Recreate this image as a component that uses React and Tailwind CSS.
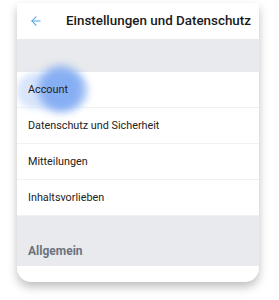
import { ArrowLeft } from "lucide-react";

const rows = ["Account", "Datenschutz und Sicherheit", "Mitteilungen", "Inhaltsvorlieben"];

export default function App() {
  return (
    <div className="w-[279px] h-[300px] bg-white pt-[3px] px-[17px] font-['Roboto',sans-serif]">
      <div className="w-[242px] h-[279px] bg-white rounded-b-[14px] shadow-[0_5px_10px_rgba(0,0,0,0.25)] overflow-hidden flex flex-col">
        {/* header */}
        <div className="h-[36px] flex items-center pl-[12px] shrink-0">
          <ArrowLeft className="w-[14px] h-[14px] text-[#4aa3df] shrink-0" strokeWidth={1.8} />
          <span className="ml-[23px] text-[13.4px] font-medium text-[#1a1a1a] whitespace-nowrap">
            Einstellungen und Datenschutz
          </span>
        </div>
        <div className="h-[33px] bg-[#e8eaed] shrink-0" />
        {rows.map((r, i) => (
          <div
            key={r}
            className="relative h-[36px] flex items-center pl-[11px] pt-[2px] border-b border-[#f0f1f3] shrink-0"
          >
            {i === 0 && (
              <>
                <div className="absolute left-[0px] top-[1px] w-[72px] h-[36px] rounded-full bg-[#d8e5fb] blur-[3px]" />
                <div className="absolute left-[21px] top-[-6px] w-[46px] h-[46px] rounded-full bg-[#7ea9f2] opacity-90 blur-[4px]" />
              </>
            )}
            <span className="relative text-[10.8px] text-[#222]">{r}</span>
          </div>
        ))}
        <div className="h-[50px] bg-[#e8eaed] flex items-end pb-[6px] pl-[11px] shrink-0">
          <span className="text-[12px] font-bold text-[#6b7380]">Allgemein</span>
        </div>
        <div className="flex-1" />
      </div>
    </div>
  );
}
